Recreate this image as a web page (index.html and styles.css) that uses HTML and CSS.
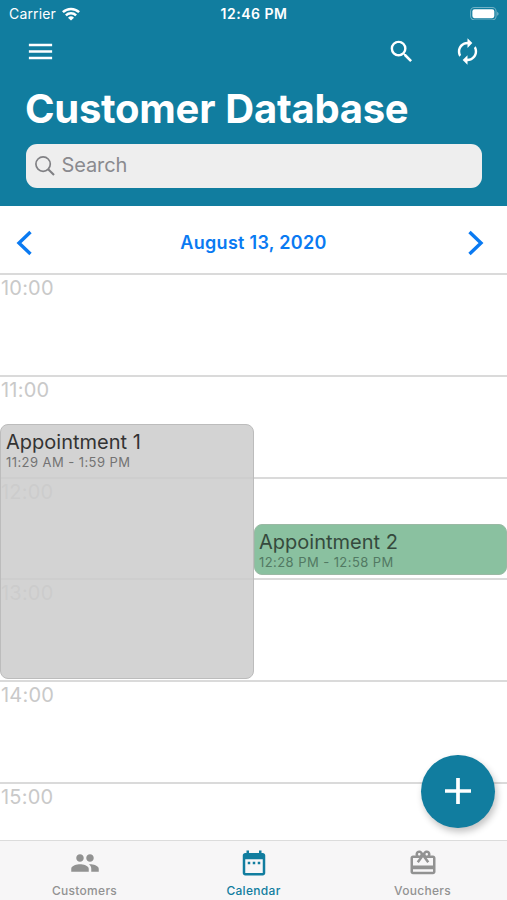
FILE: index.html
```html
<!DOCTYPE html>
<html lang="en">
<head>
<meta charset="utf-8">
<title>Customer Database</title>
<link rel="stylesheet" href="styles.css">
</head>
<body>
<div class="app">
  <header class="header">
    <div class="status">
      <div class="status-left">
        <span class="carrier">Carrier</span>
        <svg class="wifi" viewBox="0 0 18 14" fill="none" stroke="#fff" stroke-width="2.5"><path d="M.9 5.2a11.6 11.6 0 0 1 16.2 0M3.9 8.3a7.3 7.3 0 0 1 10.2 0"/><path d="M9 13.6 6 10.7a4.3 4.3 0 0 1 6 0z" fill="#fff" stroke="none"/></svg>
      </div>
      <span class="clock">12:46 PM</span>
      <svg class="battery" viewBox="0 0 30 14"><rect x=".6" y=".6" width="26.4" height="12.8" rx="4" fill="none" stroke="#fff" stroke-opacity=".4" stroke-width="1.1"/><rect x="2.4" y="2.4" width="22.8" height="9.2" rx="2.2" fill="#fff"/><path d="M28.3 4.8a2.6 2.6 0 0 1 0 4.4z" fill="#fff" fill-opacity=".5"/></svg>
    </div>
    <div class="toolbar">
      <svg class="menu-icon" viewBox="0 0 24 24"><path d="M3 18h18v-2H3v2zm0-5h18v-2H3v2zm0-7v2h18V6H3z"/></svg>
      <svg class="search-icon" viewBox="0 0 24 24"><path d="M15.5 14h-.79l-.28-.27A6.471 6.471 0 0 0 16 9.5 6.5 6.5 0 1 0 9.5 16c1.61 0 3.09-.59 4.23-1.57l.27.28v.79l5 4.99L20.49 19l-4.99-5zm-6 0C7.01 14 5 11.99 5 9.5S7.01 5 9.5 5 14 7.01 14 9.5 11.99 14 9.5 14z"/></svg>
      <svg class="refresh-icon" viewBox="0 0 24 24"><path d="M12 6v3l4-4-4-4v3c-4.42 0-8 3.58-8 8 0 1.57.46 3.03 1.24 4.26L6.7 14.8A5.9 5.9 0 0 1 6 12c0-3.31 2.69-6 6-6zm6.76 1.74L17.3 9.2c.44.84.7 1.79.7 2.8 0 3.31-2.69 6-6 6v-3l-4 4 4 4v-3c4.42 0 8-3.58 8-8 0-1.57-.46-3.03-1.24-4.26z"/></svg>
    </div>
    <h1 class="title">Customer Database</h1>
    <div class="searchbox">
      <svg class="field-icon" viewBox="0 0 20 20" fill="none" stroke="#808084" stroke-width="1.7"><circle cx="8.1" cy="8.1" r="7.2"/><path d="m13.2 13.2 5.8 5.8" stroke-width="2.1"/></svg>
      <span class="placeholder">Search</span>
    </div>
  </header>
  <div class="datebar">
    <svg class="chevron" viewBox="0 0 16 26"><path d="M14.5 2 3 13l11.5 11"/></svg>
    <span class="date">August 13, 2020</span>
    <svg class="chevron" viewBox="0 0 16 26"><path d="M1.5 2 13 13 1.5 24"/></svg>
  </div>
  <main class="timeline">
    <div class="hour">10:00</div>
    <div class="hour">11:00</div>
    <div class="hour">12:00</div>
    <div class="hour">13:00</div>
    <div class="hour">14:00</div>
    <div class="hour">15:00</div>
    <article class="event event-gray"><div class="event-title">Appointment 1</div><div class="event-time">11:29 AM - 1:59 PM</div></article>
    <article class="event event-green"><div class="event-title">Appointment 2</div><div class="event-time">12:28 PM - 12:58 PM</div></article>
    <div class="fab"><svg class="plus" viewBox="0 0 26 26"><path d="M13 0v26M0 13h26" stroke="#fff" stroke-width="3.7"/></svg></div>
  </main>
  <nav class="tabs">
    <div class="tab">
      <svg viewBox="0 0 24 24"><path d="M16 11c1.66 0 2.99-1.34 2.99-3S17.66 5 16 5s-3 1.34-3 3 1.34 3 3 3zm-8 0c1.66 0 2.99-1.34 2.99-3S9.66 5 8 5 5 6.34 5 8s1.34 3 3 3zm0 2c-2.33 0-7 1.17-7 3.5V19h14v-2.5c0-2.33-4.67-3.5-7-3.5zm8 0c-.29 0-.62.02-.97.05 1.16.84 1.97 1.97 1.97 3.45V19h6v-2.5c0-2.33-4.67-3.5-7-3.5z"/></svg>
      <span>Customers</span>
    </div>
    <div class="tab active">
      <svg viewBox="0 0 24 24"><path d="M9 11H7v2h2v-2zm4 0h-2v2h2v-2zm4 0h-2v2h2v-2zm2-7h-1V2h-2v2H8V2H6v2H5c-1.11 0-1.99.9-1.99 2L3 20c0 1.1.89 2 2 2h14c1.1 0 2-.9 2-2V6c0-1.1-.9-2-2-2zm0 16H5V9h14v11z"/></svg>
      <span>Calendar</span>
    </div>
    <div class="tab">
      <svg viewBox="0 0 24 24"><path d="M20 6h-2.18c.11-.31.18-.65.18-1 0-1.66-1.34-3-3-3-1.05 0-1.96.54-2.5 1.35l-.5.67-.5-.68C10.96 2.54 10.05 2 9 2 7.34 2 6 3.34 6 5c0 .35.07.69.18 1H4c-1.11 0-1.99.89-1.99 2L2 19c0 1.11.89 2 2 2h16c1.11 0 2-.89 2-2V8c0-1.11-.89-2-2-2zm-5-2c.55 0 1 .45 1 1s-.45 1-1 1-1-.45-1-1 .45-1 1-1zM9 4c.55 0 1 .45 1 1s-.45 1-1 1-1-.45-1-1 .45-1 1-1zm11 15H4v-2h16v2zm0-5H4V8h5.08L7 10.83 8.62 12 12 7.4l3.38 4.6L17 10.83 14.92 8H20v6z"/></svg>
      <span>Vouchers</span>
    </div>
  </nav>
</div>
</body>
</html>
```
FILE: styles.css
```css
* { box-sizing: border-box; }
body { margin: 0; font-family: Inter, "Liberation Sans", sans-serif; background: #fff; }
svg { display: block; flex: none; }
.app { width: 507px; height: 900px; display: flex; flex-direction: column; overflow: hidden; }

.header { height: 206px; flex: none; background: #117d9f; color: #fff; }
.status { height: 27px; padding: 0 8px 0 9px; display: grid; grid-template-columns: 1fr auto 1fr; align-items: center; }
.status-left { display: flex; align-items: center; gap: 6px; }
.carrier { font-size: 14px; line-height: 20px; letter-spacing: .15px; }
.wifi { width: 18px; height: 14px; }
.clock { font-size: 14px; font-weight: 600; line-height: 20px; letter-spacing: .5px; }
.battery { width: 29px; height: 13.5px; justify-self: end; }
.toolbar { height: 49px; padding: 0 25px 0 24.5px; display: flex; align-items: center; fill: #fff; }
.menu-icon { width: 31px; height: 31px; }
.search-icon { width: 29.3px; height: 29.3px; margin-left: auto; margin-right: 36.5px; }
.refresh-icon { width: 29px; height: 29px; }
.title { margin: 7px 0 0 25px; font-size: 40px; line-height: 52px; font-weight: 700; letter-spacing: -.27px; word-spacing: 1px; white-space: nowrap; }
.searchbox { margin: 9px 25px 0 25.5px; height: 43.5px; border-radius: 11px; background: #eee; display: flex; align-items: center; padding-left: 9px; gap: 7px; }
.field-icon { width: 20px; height: 20px; }
.placeholder { font-size: 20px; line-height: 28px; letter-spacing: -.1px; color: #8a8a8e; margin-top: -1px; }

.datebar { height: 67px; flex: none; padding: 6px 23px 0 16px; display: flex; align-items: center; justify-content: space-between; color: #0a7af2; }
.chevron { width: 16px; height: 26px; fill: none; stroke: #0a7af2; stroke-width: 3.4; }
.date { font-size: 18px; font-weight: 600; line-height: 24px; letter-spacing: .3px; margin: 1px 0 0 7px; }

.timeline { position: relative; flex: 1; min-height: 0; overflow: hidden; }
.hour { height: 101.8px; border-top: 2px solid #dadada; padding: 0 0 0 1px; font-size: 20px; line-height: 26px; letter-spacing: .2px; color: #c9c9c9; }
.event { position: absolute; border-radius: 8px; border: 1.5px solid; padding: 4px 5px; white-space: nowrap; }
.event-gray { left: 0; top: 151px; width: 254px; height: 255px; background: rgba(204,204,204,.86); border-color: #bcbcbc; }
.event-green { left: 254px; top: 251px; width: 253px; height: 51px; background: #8ac1a0; border-color: #9ab9a4; padding-left: 4px; }
.event-title { font-size: 20px; line-height: 26px; color: #333; }
.event-time { font-size: 13px; line-height: 15px; letter-spacing: .43px; color: #737373; }
.event-green .event-title { color: #354a3d; }
.event-green .event-time { color: #527963; }
.fab { position: absolute; left: 421px; top: 481.5px; width: 74px; height: 73.5px; border-radius: 50%; background: #117d9f; display: flex; align-items: center; justify-content: center; box-shadow: 2px 4px 7px rgba(0,0,0,.24); }
.plus { width: 26px; height: 26px; }

.tabs { height: 60px; flex: none; border-top: 1px solid #dcdcdc; background: #f7f6f7; display: grid; grid-template-columns: repeat(3, 1fr); }
.tab { display: flex; flex-direction: column; align-items: center; padding-top: 7px; color: #929292; font-size: 12px; font-weight: 500; line-height: 16px; letter-spacing: .3px; }
.tab svg { width: 30px; height: 30px; fill: currentColor; margin-bottom: 5px; }
.active { color: #117d9f; }
```
